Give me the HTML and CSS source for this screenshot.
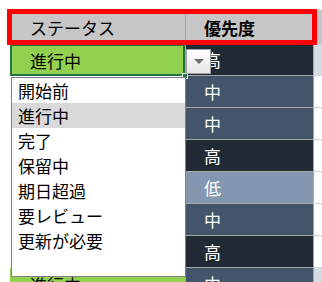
FILE: index.html
```html
<!DOCTYPE html>
<html lang="ja">
<head>
    <meta charset="UTF-8">
    <meta name="viewport" content="width=device-width, initial-scale=1.0">
    <title>ステータス</title>
    <link rel="stylesheet" href="styles.css">
</head>
<body>
    <div class="sheet">
        <div class="row header">
            <div class="cell col-a">ステータス</div>
            <div class="cell col-b bold">優先度</div>
            <div class="cell col-c"></div>
        </div>

        <div class="row">
            <div class="cell col-a status-active selected">進行中<span class="fill-handle"></span></div>
            <div class="cell col-b prio-high">高</div>
            <div class="cell col-c shade"></div>
        </div>
        <div class="row">
            <div class="cell col-a"></div>
            <div class="cell col-b prio-mid">中</div>
            <div class="cell col-c"></div>
        </div>
        <div class="row">
            <div class="cell col-a"></div>
            <div class="cell col-b prio-mid">中</div>
            <div class="cell col-c"></div>
        </div>
        <div class="row">
            <div class="cell col-a"></div>
            <div class="cell col-b prio-high">高</div>
            <div class="cell col-c"></div>
        </div>
        <div class="row">
            <div class="cell col-a"></div>
            <div class="cell col-b prio-low">低</div>
            <div class="cell col-c"></div>
        </div>
        <div class="row">
            <div class="cell col-a"></div>
            <div class="cell col-b prio-mid">中</div>
            <div class="cell col-c"></div>
        </div>
        <div class="row">
            <div class="cell col-a"></div>
            <div class="cell col-b prio-high">高</div>
            <div class="cell col-c"></div>
        </div>
        <div class="row">
            <div class="cell col-a status-active">進行中</div>
            <div class="cell col-b prio-mid">中</div>
            <div class="cell col-c shade"></div>
        </div>

        <!-- annotation around the header row -->
        <div class="header-mark"></div>

        <!-- data validation dropdown -->
        <button class="dropdown-btn"><span class="arrow"></span></button>
        <ul class="dropdown-list">
            <li>開始前</li>
            <li class="current">進行中</li>
            <li>完了</li>
            <li>保留中</li>
            <li>期日超過</li>
            <li>要レビュー</li>
            <li>更新が必要</li>
        </ul>
    </div>
</body>
</html>
```

FILE: styles.css
```css
* {
    margin: 0;
    padding: 0;
    box-sizing: border-box;
}

body {
    background: #fff;
    font-family: "Noto Sans CJK JP", "Noto Sans", sans-serif;
    font-size: 17px;
    color: #000;
    overflow: hidden;
}

.sheet {
    position: relative;
    padding: 10px 0 0 10px;
}

.row {
    display: grid;
    grid-template-columns: 176px 128px 1fr;
    height: 32px;
}

.row.header {
    height: 34px;
}

.cell {
    display: flex;
    align-items: center;
    white-space: nowrap;
    line-height: 1;
}

.col-a {
    padding-left: 20px;
    border-right: 1px solid #a6a6a6;
}

.col-b {
    padding-left: 18px;
    border-right: 1px solid #a6a6a6;
    border-bottom: 1px solid #a6a6a6;
}

.col-c {
    border-bottom: 1px solid #d4d4d4;
}

.header .cell {
    background: #c6c6c6;
    border-bottom: none;
}

.bold {
    font-weight: bold;
}

.status-active {
    background: #92d050;
}

.selected {
    position: relative;
    box-shadow: inset 0 0 0 2px #217346;
}

.fill-handle {
    position: absolute;
    right: -3px;
    bottom: -3px;
    width: 6px;
    height: 6px;
    background: #217346;
    border: 1px solid #fff;
}

.prio-high {
    background: #222a35;
    color: #fff;
}

.prio-mid {
    background: #44546a;
    color: #fff;
}

.prio-low {
    background: #8497b0;
    color: #fff;
}

.shade {
    background: #d6dce4;
}

.header-mark {
    position: absolute;
    left: 7px;
    top: 9px;
    width: 310px;
    height: 36px;
    border: 5px solid #ff0000;
}

.dropdown-btn {
    position: absolute;
    left: 186px;
    top: 49px;
    width: 25px;
    height: 25px;
    border: 1px solid #a0a0a0;
    background: linear-gradient(#ffffff, #e6e6e6);
    display: flex;
    align-items: center;
    justify-content: center;
}

.arrow {
    width: 0;
    height: 0;
    border-left: 5px solid transparent;
    border-right: 5px solid transparent;
    border-top: 5px solid #6d6d6d;
}

.dropdown-list {
    position: absolute;
    left: 11px;
    top: 77px;
    width: 175px;
    height: 200px;
    list-style: none;
    background: #fff;
    border: 1px solid #808080;
}

.dropdown-list li {
    height: 25px;
    padding-left: 6px;
    display: flex;
    align-items: center;
    line-height: 1;
}

.dropdown-list li.current {
    background: #d9d9d9;
}
```
